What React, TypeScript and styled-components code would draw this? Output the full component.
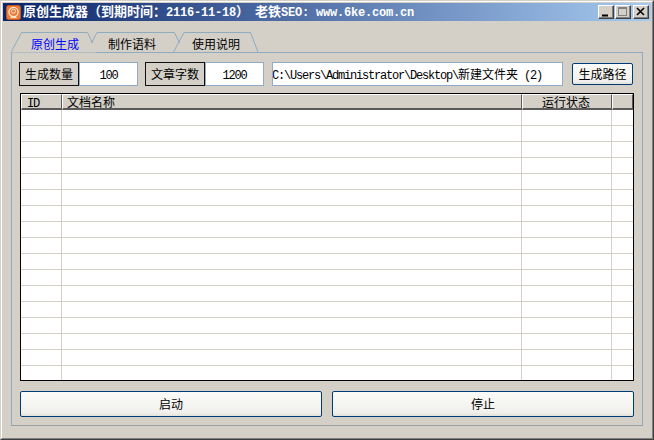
import React from "react";
import styled, { createGlobalStyle } from "styled-components";

const CJK = '"Noto Sans CJK SC", "Noto Sans", sans-serif';

const Global = createGlobalStyle`
  html, body { margin: 0; padding: 0; background: #d4d0c8; }
  * { box-sizing: border-box; }
`;

const WindowOuter = styled.div`
  width: 654px;
  height: 440px;
  border: 1px solid;
  border-color: #d4d0c8 #404040 #404040 #d4d0c8;
  font-family: ${CJK};
  font-size: 12px;
  color: #000;
  overflow: hidden;
`;

const WindowInner = styled.div`
  height: 100%;
  border: 1px solid;
  border-color: #fff #808080 #808080 #fff;
  background: #d4d0c8;
  padding: 1px;
  display: flex;
  flex-direction: column;
`;

const TitleBar = styled.div`
  height: 18px;
  flex: none;
  display: flex;
  align-items: center;
  padding: 0 2px 0 3px;
  background: linear-gradient(90deg, #0a246a, #a6caf0);
`;

const TitleIcon = styled.svg`
  width: 15px;
  height: 15px;
  flex: none;
  margin-right: 2px;
`;

const TitleText = styled.div`
  flex: 1;
  color: #fff;
  font-size: 13px;
  font-weight: 700;
  line-height: 18px;
  white-space: pre;
`;

const Ascii = styled.span<{ $bold?: boolean }>`
  font-family: "Liberation Mono", monospace;
  font-size: 12px;
  letter-spacing: ${(p) => (p.$bold ? -0.2 : -1.2)}px;
`;

const CaptionButton = styled.div<{ $gap: number }>`
  width: 16px;
  height: 14px;
  margin-left: ${(p) => p.$gap}px;
  background: #d4d0c8;
  border: 1px solid;
  border-color: #fff #404040 #404040 #fff;
  box-shadow: inset -1px -1px 0 #808080;
  display: flex;
  align-items: center;
  justify-content: center;
`;

const CaptionIcon = styled.svg`
  width: 14px;
  height: 12px;
`;

const Body = styled.div`
  flex: 1;
  display: flex;
  flex-direction: column;
  padding: 11px 8px 0 8px;
`;

const TabStrip = styled.div`
  position: relative;
  z-index: 1;
  width: 260px;
  height: 21px;
  flex: none;
  display: flex;
  padding-left: 20px;
`;

const TabOutline = styled.svg`
  position: absolute;
  left: 0;
  top: 0;
  width: 260px;
  height: 21px;
`;

const Tab = styled.div<{ $active?: boolean; $gap: number }>`
  position: relative;
  margin-left: ${(p) => p.$gap}px;
  width: 48px;
  height: 20px;
  line-height: 23px;
  white-space: nowrap;
  color: ${(p) => (p.$active ? "#0000ff" : "#000")};
`;

const Panel = styled.div`
  width: 632px;
  height: 374px;
  margin-top: -1px;
  border: 1px solid;
  border-color: #8fabc0 #8fabc0 #9aa0a4 #8fabc0;
  padding: 9px 8px 0 7px;
  display: flex;
  flex-direction: column;
`;

const Toolbar = styled.div`
  height: 24px;
  flex: none;
  display: flex;
  align-items: center;
`;

const FieldLabel = styled.div`
  width: 60px;
  height: 24px;
  line-height: 22px;
  text-align: center;
  border: 1px solid #111;
  background: #d4d0c8;
`;

const Field = styled.div<{ $width: number; $gap?: number }>`
  width: ${(p) => p.$width}px;
  height: 24px;
  margin-right: ${(p) => p.$gap ?? 0}px;
  line-height: 22px;
  text-align: center;
  background: #fff;
  border: 1px solid #8fabc8;
`;

const PathField = styled(Field)`
  text-align: left;
  text-indent: -1px;
  white-space: pre;
  overflow: hidden;
`;

const ActionButton = styled.button<{ $width: number }>`
  width: ${(p) => p.$width}px;
  padding: 0 0 1px;
  font: inherit;
  color: #000;
  background: linear-gradient(180deg, #fbfbf9 0%, #f1f0ec 85%, #e4e1da 100%);
  border: 1px solid #003c74;
  border-radius: 2px;
`;

const PathButton = styled(ActionButton)`
  height: 22px;
  margin-left: 9px;
`;

const TableBox = styled.div`
  margin: 7px 0 0 1px;
  width: 614px;
  height: 288px;
  flex: none;
  border: 1px solid #000;
  background: #fff;
  overflow: hidden;
`;

const HeaderRow = styled.div`
  display: grid;
  grid-template-columns: 41px 460px 90px 1fr;
  height: 16px;
`;

const HeaderCell = styled.div<{ $center?: boolean; $pad: number }>`
  height: 16px;
  padding: 0 ${(p) => (p.$center ? 2 : 0)}px 0 ${(p) => p.$pad}px;
  line-height: 13px;
  white-space: nowrap;
  text-align: ${(p) => (p.$center ? "center" : "left")};
  background: #d4d0c8;
  border-top: 1px solid #fff;
  border-left: 1px solid #fff;
  border-bottom: 2px solid #5a5a5a;
  border-right: 1px solid #5a5a5a;
`;

const Row = styled.div`
  display: grid;
  grid-template-columns: 41px 460px 90px 1fr;
  height: 16px;
`;

const Cell = styled.div`
  border-right: 1px solid #d4d0c8;
  border-bottom: 1px solid #d4d0c8;
  &:last-child { border-right: none; }
`;

const Footer = styled.div`
  flex: none;
  margin: 10px 0 0 1px;
  display: flex;
  justify-content: space-between;
  width: 614px;
`;

const BigButton = styled(ActionButton)`
  height: 26px;
`;

const rows = Array.from({ length: 17 }, (_, i) => i);

export default function App() {
  return (
    <>
      <Global />
      <WindowOuter>
        <WindowInner>
          <TitleBar>
            <TitleIcon viewBox="0 0 15 15">
              <rect x="0.5" y="0.5" width="14" height="14" rx="2" fill="#ee7a35" stroke="#c9561c" />
              <circle cx="7.5" cy="7" r="4.6" fill="none" stroke="#fde6d4" strokeWidth="1.3" />
              <circle cx="7.5" cy="6.2" r="2" fill="none" stroke="#fde6d4" strokeWidth="1" />
              <path d="M4.5 12.5h6" stroke="#fde6d4" strokeWidth="1.2" />
            </TitleIcon>
            <TitleText>
              原创生成器（到期时间：<Ascii $bold>2116-11-18</Ascii>）  老铁<Ascii $bold>SEO: www.6ke.com.cn</Ascii>
            </TitleText>
            <CaptionButton $gap={0}>
              <CaptionIcon viewBox="0 0 14 12">
                <path d="M3 9.5h6" stroke="#000" strokeWidth="2" />
              </CaptionIcon>
            </CaptionButton>
            <CaptionButton $gap={1}>
              <CaptionIcon viewBox="0 0 14 12">
                <rect x="2.5" y="1.5" width="8" height="8" fill="none" stroke="#808080" />
                <path d="M2 2.5h9" stroke="#808080" />
              </CaptionIcon>
            </CaptionButton>
            <CaptionButton $gap={2}>
              <CaptionIcon viewBox="0 0 14 12">
                <path d="M3 2l7 7M10 2l-7 7" stroke="#000" strokeWidth="1.6" />
              </CaptionIcon>
            </CaptionButton>
          </TitleBar>
          <Body>
            <TabStrip>
              <TabOutline viewBox="0 0 260 21">
                <path d="M0.5 21V19.5L10.5 0.5H76.5L81.5 11L85.5 20.5H0.5Z" fill="#d4d0c8" />
                <path
                  d="M0.5 21V19.5L10.5 0.5H76.5L81.5 11M86 0.5L80.5 11M86 0.5H163.5L168.5 11M173 0.5L162.5 20M173 0.5H239.5L247 20"
                  fill="none"
                  stroke="#8fabc0"
                />
              </TabOutline>
              <Tab $active $gap={0}>原创生成</Tab>
              <Tab $gap={29}>制作语料</Tab>
              <Tab $gap={36}>使用说明</Tab>
            </TabStrip>
            <Panel>
              <Toolbar>
                <FieldLabel>生成数量</FieldLabel>
                <Field $width={59} $gap={7}><Ascii>100</Ascii></Field>
                <FieldLabel>文章字数</FieldLabel>
                <Field $width={59} $gap={8}><Ascii>1200</Ascii></Field>
                <PathField $width={291}>
                  <Ascii>C:\Users\Administrator\Desktop\</Ascii>新建文件夹<Ascii> (2)</Ascii>
                </PathField>
                <PathButton $width={61}>生成路径</PathButton>
              </Toolbar>
              <TableBox>
                <HeaderRow>
                  <HeaderCell $pad={5}><Ascii>ID</Ascii></HeaderCell>
                  <HeaderCell $pad={4}>文档名称</HeaderCell>
                  <HeaderCell $center $pad={0}>运行状态</HeaderCell>
                  <HeaderCell $pad={0} />
                </HeaderRow>
                {rows.map((r) => (
                  <Row key={r}>
                    <Cell />
                    <Cell />
                    <Cell />
                    <Cell />
                  </Row>
                ))}
              </TableBox>
              <Footer>
                <BigButton $width={302}>启动</BigButton>
                <BigButton $width={302}>停止</BigButton>
              </Footer>
            </Panel>
          </Body>
        </WindowInner>
      </WindowOuter>
    </>
  );
}
